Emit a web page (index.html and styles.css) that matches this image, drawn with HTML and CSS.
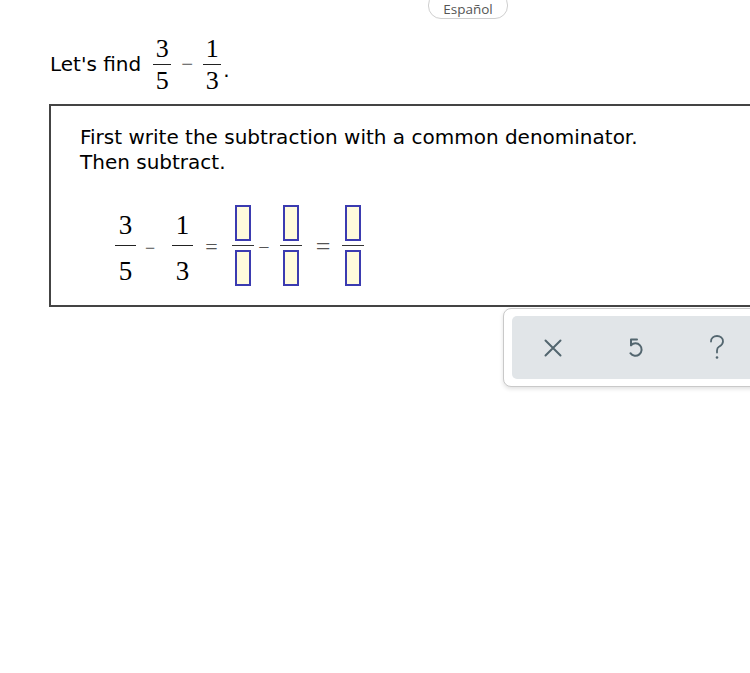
FILE: index.html
```html
<!DOCTYPE html>
<html lang="en">
<head>
<meta charset="utf-8">
<title>Subtract fractions</title>
<link rel="stylesheet" href="styles.css">
</head>
<body>
<div class="lang-bar"><button class="lang">Español</button></div>

<div class="prompt">
  <span class="lead">Let's find</span>
  <span class="frac frac-sm frac-first"><span class="num">3</span><span class="bar"></span><span class="den">5</span></span>
  <span class="op op-sm">−</span>
  <span class="frac frac-sm"><span class="num">1</span><span class="bar"></span><span class="den">3</span></span>
  <span class="dot">.</span>
</div>

<div class="card">
  <p class="instr">First write the subtraction with a common denominator.<br>Then subtract.</p>
  <div class="eq">
    <span class="frac frac-md"><span class="num">3</span><span class="bar"></span><span class="den">5</span></span>
    <span class="op op-minus">−</span>
    <span class="frac frac-md"><span class="num">1</span><span class="bar"></span><span class="den">3</span></span>
    <span class="op op-eq">=</span>
    <span class="frac frac-in"><span class="box"></span><span class="bar"></span><span class="box"></span></span>
    <span class="op op-minus2">−</span>
    <span class="frac frac-in"><span class="box"></span><span class="bar"></span><span class="box"></span></span>
    <span class="op op-eq2">=</span>
    <span class="frac frac-in"><span class="box"></span><span class="bar"></span><span class="box"></span></span>
  </div>
</div>

<div class="tools">
  <div class="tools-inner">
    <button class="tool" aria-label="Clear">
      <svg width="20" height="20" viewBox="0 0 20 20"><path d="M2.5 2.5 L17.5 17.5 M17.5 2.5 L2.5 17.5" fill="none" stroke="currentColor" stroke-width="2" stroke-linecap="round"/></svg>
    </button>
    <button class="tool" aria-label="Undo">
      <svg width="18" height="21" viewBox="0 0 18 21"><path d="M11 2.5 H5 V8.2" fill="none" stroke="currentColor" stroke-width="2" stroke-linecap="round" stroke-linejoin="round"/><path d="M5 8.2 A6.2 6.2 0 1 1 4.4 16.2" fill="none" stroke="currentColor" stroke-width="2" stroke-linecap="round"/></svg>
    </button>
    <button class="tool" aria-label="Help">
      <svg width="20" height="28" viewBox="0 0 20 28"><path d="M4 7.5 C4 3.8 6.8 2 10 2 C13.4 2 16 4.2 16 7.4 C16 10.2 14 11.4 12.2 12.6 C10.6 13.6 10 14.6 10 16.5 V18.5" fill="none" stroke="currentColor" stroke-width="1.8" stroke-linecap="round"/><circle cx="10" cy="23.5" r="1.3" fill="currentColor"/></svg>
    </button>
  </div>
</div>
</body>
</html>
```

FILE: styles.css
```css
html, body {
  margin: 0;
  padding: 0;
  overflow: hidden;
  background: #ffffff;
}

body {
  width: 750px;
  height: 673px;
  font-family: "DejaVu Sans", Verdana, sans-serif;
  font-size: 20px;
  color: #000;
}

/* language pill */
.lang-bar {
  height: 19px;
  padding-left: 428px;
  overflow: visible;
}

.lang {
  display: block;
  margin-top: -8px;
  width: 80px;
  height: 27px;
  padding: 7px 0 0;
  border: 1px solid #cfcfcf;
  border-radius: 13px;
  background: #fff;
  font-family: "Open Sans", "Noto Sans", sans-serif;
  font-size: 13.5px;
  line-height: 14px;
  color: #555;
  text-align: center;
  box-sizing: border-box;
}

/* prompt line */
.prompt {
  display: flex;
  align-items: center;
  margin-top: 26px;
  padding-left: 50px;
  height: 54px;
}

.lead {
  line-height: 25px;
}

.frac {
  display: inline-flex;
  flex-direction: column;
  align-items: center;
  font-family: "Liberation Serif", "Times New Roman", serif;
}

.frac .bar {
  display: block;
  height: 1px;
  background: #222;
  align-self: stretch;
}

.frac-sm {
  width: 18px;
  font-size: 26px;
  line-height: 26px;
}

.frac-sm .num,
.frac-sm .den {
  padding-top: 1px;
  height: 26px;
}

.frac-sm .bar {
  margin: 2px 0;
}

.frac-first {
  margin-left: 12px;
}

.op {
  display: inline-block;
  font-family: "Liberation Serif", "Times New Roman", serif;
  color: #555;
  text-align: center;
}

.op-sm {
  width: 12px;
  margin: 0 10px;
  font-size: 21px;
  line-height: 21px;
}

.dot {
  margin-left: 2px;
  line-height: 25px;
  padding-top: 12px;
  font-size: 20px;
}

/* card */
.card {
  margin-left: 49px;
  margin-top: 13px;
  width: 760px;
  height: 203px;
  border: 2px solid #444;
  border-right: none;
  box-sizing: border-box;
  padding: 19px 0 0 29px;
}

.instr {
  margin: 0;
  line-height: 25px;
  font-size: 20px;
}

.eq {
  display: flex;
  align-items: center;
  margin-top: 30px;
  margin-left: 35px;
}

.frac-md {
  width: 21px;
  font-size: 27px;
  line-height: 28px;
}

.frac-md .num {
  padding: 6px 0 2px;
  height: 28px;
}

.frac-md .den {
  padding: 7px 0 1px;
  height: 28px;
}

.frac-md .bar {
  margin: 4px 0;
}

.frac-in {
  width: 22px;
}

.frac-in .box {
  display: block;
  width: 16px;
  height: 36px;
  border: 2px solid #3b3bb0;
  background: #fffbdc;
  box-sizing: border-box;
}

.frac-in .bar {
  margin: 4px 0;
  background: #333;
}

.op-minus {
  width: 10px;
  margin: 0 17px 0 9px;
  font-size: 18px;
  line-height: 18px;
  padding-top: 4px;
  overflow: hidden;
}

.op-eq {
  width: 13px;
  margin: 0 14px 0 12px;
  font-size: 22px;
  line-height: 22px;
  padding-top: 3px;
}

.op-minus2 {
  width: 12px;
  margin: 0 10px 0 4px;
  font-size: 20px;
  line-height: 20px;
  padding-top: 3px;
}

.op-eq2 {
  width: 16px;
  margin: 0 11px 0 13px;
  font-size: 26px;
  line-height: 26px;
  padding-top: 3px;
}

/* toolbar */
.tools {
  margin-left: 503px;
  margin-top: 1px;
  width: 270px;
  height: 79px;
  padding: 7px 0 7px 8px;
  box-sizing: border-box;
  border: 1px solid #c9c9c9;
  border-radius: 8px;
  background: #fff;
  box-shadow: 0 2px 4px rgba(0, 0, 0, 0.12);
}

.tools-inner {
  display: flex;
  height: 63px;
  background: #e1e5e8;
  border-radius: 5px;
}

.tool {
  width: 82px;
  height: 63px;
  border: none;
  background: transparent;
  padding: 0;
  display: flex;
  align-items: center;
  justify-content: center;
  color: #53666f;
}

.tool svg {
  display: block;
}
```
